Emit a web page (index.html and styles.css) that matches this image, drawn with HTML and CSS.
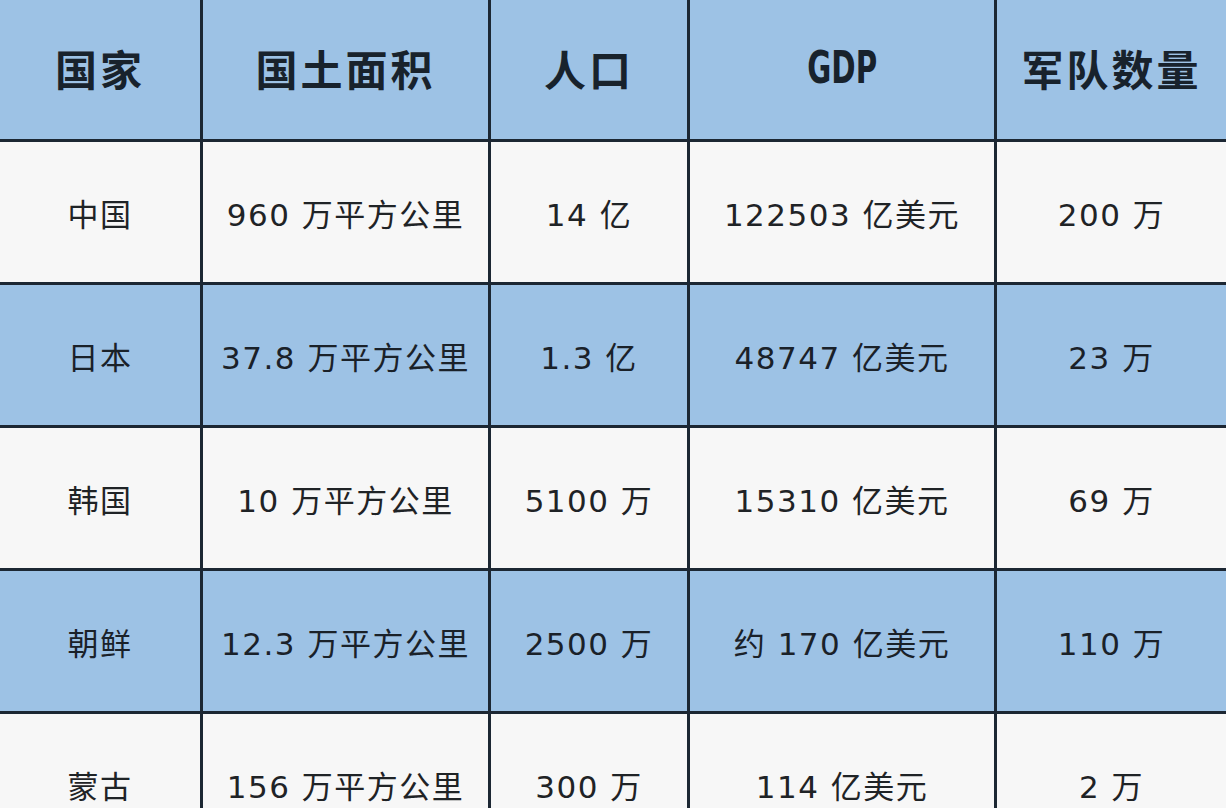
FILE: index.html
```html
<!DOCTYPE html>
<html lang="zh-CN">
<head>
<meta charset="utf-8">
<title>国家数据对比</title>
<link rel="stylesheet" href="styles.css">
</head>
<body>
<div class="table">
  <div class="cell head">国家</div>
  <div class="cell head">国土面积</div>
  <div class="cell head">人口</div>
  <div class="cell head"><span class="latin">GDP</span></div>
  <div class="cell head">军队数量</div>

  <div class="cell light">中国</div>
  <div class="cell light">960 万平方公里</div>
  <div class="cell light">14 亿</div>
  <div class="cell light">122503 亿美元</div>
  <div class="cell light">200 万</div>

  <div class="cell blue">日本</div>
  <div class="cell blue">37.8 万平方公里</div>
  <div class="cell blue">1.3 亿</div>
  <div class="cell blue">48747 亿美元</div>
  <div class="cell blue">23 万</div>

  <div class="cell light">韩国</div>
  <div class="cell light">10 万平方公里</div>
  <div class="cell light">5100 万</div>
  <div class="cell light">15310 亿美元</div>
  <div class="cell light">69 万</div>

  <div class="cell blue">朝鲜</div>
  <div class="cell blue">12.3 万平方公里</div>
  <div class="cell blue">2500 万</div>
  <div class="cell blue">约 170 亿美元</div>
  <div class="cell blue">110 万</div>

  <div class="cell light">蒙古</div>
  <div class="cell light">156 万平方公里</div>
  <div class="cell light">300 万</div>
  <div class="cell light">114 亿美元</div>
  <div class="cell light">2 万</div>
</div>
</body>
</html>
```
FILE: styles.css
```css
html, body {
  margin: 0;
  padding: 0;
  background: #f7f7f7;
  overflow: hidden;
}

.table {
  display: grid;
  grid-template-columns: 200px 285px 196px 304px 229px;
  grid-template-rows: 139px 140px 140px 140px 140px 140px;
  gap: 3px;
  width: 1226px;
  background: #1c2733;
}

.cell {
  display: flex;
  align-items: center;
  justify-content: center;
  font-family: "DejaVu Sans", "Noto Sans CJK SC", sans-serif;
  font-size: 31px;
  letter-spacing: 1.5px;
  color: #1f2326;
  white-space: nowrap;
}

.head {
  background: #9dc2e5;
  font-family: "Noto Sans CJK SC", sans-serif;
  font-size: 42px;
  font-weight: 700;
  letter-spacing: 3px;
  color: #18222c;
  padding-bottom: 4px;
}

.latin {
  display: inline-block;
  font-family: "DejaVu Sans Condensed", "DejaVu Sans", sans-serif;
  font-size: 44px;
  font-weight: 700;
  letter-spacing: 0;
  transform: scaleX(0.74);
}

.light {
  background: #f7f7f7;
}

.blue {
  background: #9dc2e5;
  color: #1a2129;
}
```
